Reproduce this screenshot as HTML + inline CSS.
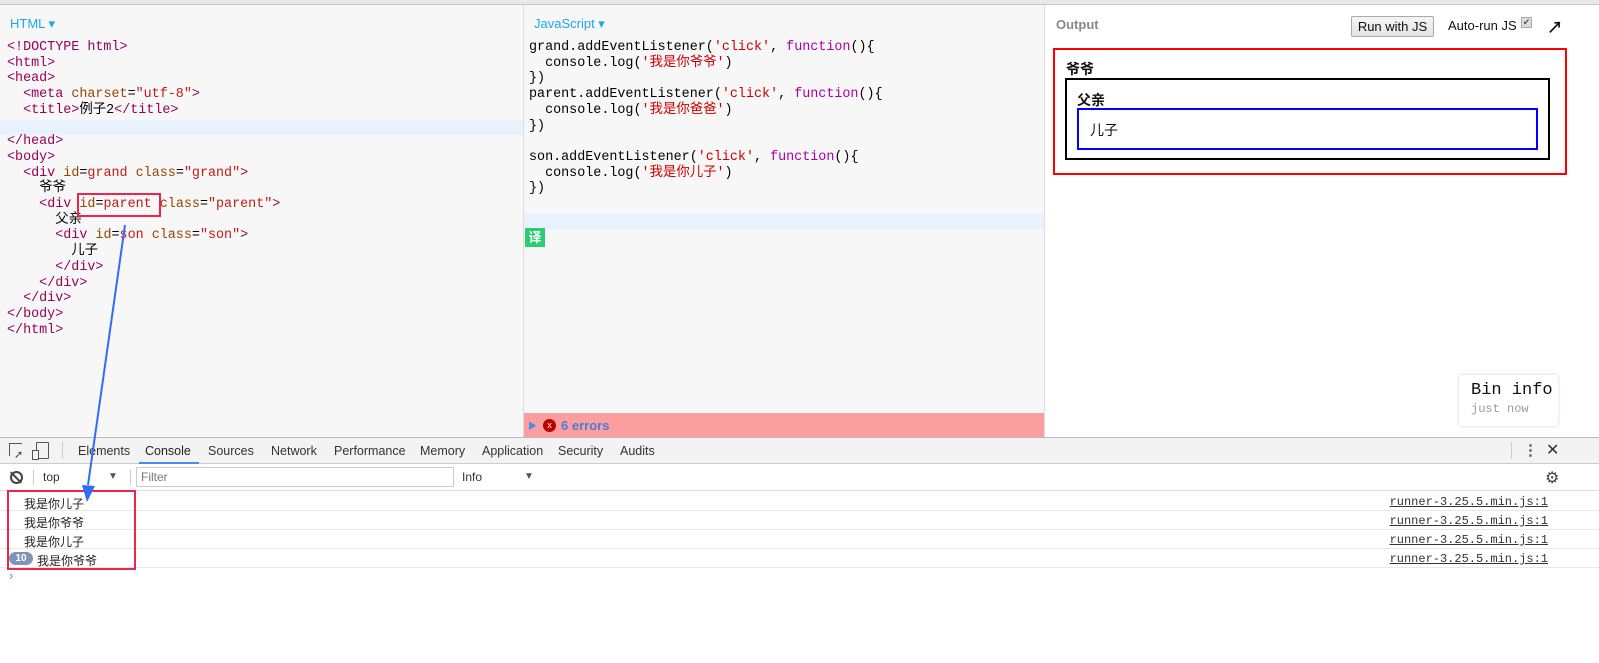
<!DOCTYPE html>
<html><head><meta charset="utf-8"><style>
*{margin:0;padding:0;box-sizing:border-box}
body{width:1599px;height:663px;overflow:hidden;position:relative;background:#fff;font-family:"Liberation Sans","Noto Sans CJK SC",sans-serif}
.abs{position:absolute}
.code{font-family:"Liberation Mono","Noto Sans CJK SC",monospace;font-size:13.4px;line-height:15.7px;white-space:pre;color:#000}
.t{color:#905}.a{color:#994500}.s{color:#c41a16}.k{color:#a0a}
.s2{color:#c00}
.lbl{font-size:13px;color:#19a8f2}
.tab{position:absolute;top:444px;font-size:12.5px;color:#333}
.row{position:absolute;left:0;width:1599px;height:19px;border-bottom:1px solid #e8e8e8;font-size:12px}
.row .m{position:absolute;left:24px;top:3px;color:#222;font-family:"Liberation Sans","Noto Sans CJK SC",sans-serif}
.row .r{position:absolute;right:51px;top:3px;font-family:"Liberation Mono",monospace;font-size:12px;color:#333;text-decoration:underline}
</style></head><body>
<div class="abs" style="left:0;top:0;width:1599px;height:5px;background:#e9e9e9;border-bottom:1px solid #c8c8c8"></div>
<!-- HTML panel -->
<div class="abs" style="left:0;top:5px;width:523px;height:432px;background:#f7f7f7"></div>
<div class="abs" style="left:523px;top:5px;width:1px;height:432px;background:#ddd"></div>
<div class="abs lbl" style="left:10px;top:16px">HTML ▾</div>
<div class="abs" style="left:0;top:120px;width:523px;height:15px;background:#e8f2fe"></div>
<div class="abs code" style="left:7px;top:40px"><span class="t">&lt;!DOCTYPE html&gt;</span>
<span class="t">&lt;html&gt;</span>
<span class="t">&lt;head&gt;</span>
  <span class="t">&lt;meta</span> <span class="a">charset</span>=<span class="s">"utf-8"</span><span class="t">&gt;</span>
  <span class="t">&lt;title&gt;</span>例子2<span class="t">&lt;/title&gt;</span>

<span class="t">&lt;/head&gt;</span>
<span class="t">&lt;body&gt;</span>
  <span class="t">&lt;div</span> <span class="a">id</span>=<span class="s">grand</span> <span class="a">class</span>=<span class="s">"grand"</span><span class="t">&gt;</span>
    爷爷
    <span class="t">&lt;div</span> <span class="a">id</span>=<span class="s">parent</span> <span class="a">class</span>=<span class="s">"parent"</span><span class="t">&gt;</span>
      父亲
      <span class="t">&lt;div</span> <span class="a">id</span>=<span class="s">son</span> <span class="a">class</span>=<span class="s">"son"</span><span class="t">&gt;</span>
        儿子
      <span class="t">&lt;/div&gt;</span>
    <span class="t">&lt;/div&gt;</span>
  <span class="t">&lt;/div&gt;</span>
<span class="t">&lt;/body&gt;</span>
<span class="t">&lt;/html&gt;</span></div>
<div class="abs" style="left:77px;top:193px;width:84px;height:24px;border:2px solid #f0244a"></div>
<!-- JS panel -->
<div class="abs" style="left:524px;top:5px;width:520px;height:432px;background:#f7f7f7"></div>
<div class="abs" style="left:1044px;top:5px;width:1px;height:432px;background:#ddd"></div>
<div class="abs lbl" style="left:534px;top:16px">JavaScript ▾</div>
<div class="abs" style="left:524px;top:214px;width:520px;height:16px;background:#e8f2fe"></div>
<div class="abs code" style="left:529px;top:40px">grand.addEventListener(<span class="s2">'click'</span>, <span class="k">function</span>(){
  console.log(<span class="s2">'我是你爷爷'</span>)
})
parent.addEventListener(<span class="s2">'click'</span>, <span class="k">function</span>(){
  console.log(<span class="s2">'我是你爸爸'</span>)
})

son.addEventListener(<span class="s2">'click'</span>, <span class="k">function</span>(){
  console.log(<span class="s2">'我是你儿子'</span>)
})</div>
<div class="abs" style="left:525px;top:228px;width:20px;height:19px;background:#2ecc71;color:#fff;font-size:13px;font-weight:bold;text-align:center;line-height:19px">译</div>
<div class="abs" style="left:524px;top:413px;width:520px;height:24px;background:#fc9d9f"></div>
<div class="abs" style="left:528px;top:419px;color:#4a90e2;font-size:9px">▶</div>
<div class="abs" style="left:543px;top:419px;width:13px;height:13px;border-radius:50%;background:#b00;color:#fff;font-size:9px;line-height:13px;text-align:center">x</div>
<div class="abs" style="left:561px;top:418px;color:#4a7fd0;font-size:13px;font-weight:bold">6 errors</div>
<!-- Output -->
<div class="abs" style="left:1056px;top:17px;color:#888;font-size:13px;font-weight:bold">Output</div>
<div class="abs" style="left:1351px;top:16px;width:83px;height:21px;border:1px solid #aaa;border-radius:2px;background:linear-gradient(#f5f5f5,#e4e4e4);font-size:13px;text-align:center;line-height:19px;color:#111">Run with JS</div>
<div class="abs" style="left:1448px;top:18px;font-size:13px;color:#111">Auto-run JS</div>
<div class="abs" style="left:1521px;top:17px;width:11px;height:11px;border:1px solid #aaa;background:#ddd;font-size:9px;line-height:9px;text-align:center;color:#555">✔</div>
<div class="abs" style="left:1547px;top:14px;font-size:16px;font-weight:bold;color:#111">↗</div>
<div class="abs" style="left:1053px;top:48px;width:514px;height:127px;border:2px solid #f00"></div>
<div class="abs" style="left:1066px;top:59px;font-size:14px;font-weight:bold;color:#111">爷爷</div>
<div class="abs" style="left:1065px;top:78px;width:485px;height:82px;border:2px solid #000"></div>
<div class="abs" style="left:1077px;top:90px;font-size:14px;font-weight:bold;color:#111">父亲</div>
<div class="abs" style="left:1077px;top:108px;width:461px;height:42px;border:2px solid #00f"></div>
<div class="abs" style="left:1090px;top:120px;font-size:14px;color:#111">儿子</div>
<div class="abs" style="left:1459px;top:375px;width:99px;height:51px;background:#fff;box-shadow:0 0 3px rgba(0,0,0,.2);border-radius:2px"></div>
<div class="abs" style="left:1471px;top:381px;font-family:'Liberation Mono',monospace;font-size:17px;color:#111">Bin info</div>
<div class="abs" style="left:1471px;top:402px;font-family:'Liberation Mono',monospace;font-size:12px;color:#999">just now</div>
<!-- devtools -->
<div class="abs" style="left:0;top:437px;width:1599px;height:27px;background:#f3f3f3;border-top:1px solid #bbb;border-bottom:1px solid #ccc"></div>
<div class="abs" style="left:9px;top:443px;width:13px;height:13px;border:1px solid #555;border-right:none;border-bottom:none;font-size:10px"></div>
<div class="abs" style="left:14px;top:448px;font-size:11px;color:#444">➚</div>
<div class="abs" style="left:36px;top:442px;width:13px;height:17px;border:1.5px solid #555;border-radius:1px"></div>
<div class="abs" style="left:32px;top:450px;width:7px;height:10px;border:1.5px solid #555;background:#f3f3f3"></div>
<div class="abs" style="left:62px;top:442px;width:1px;height:17px;background:#ccc"></div>
<div class="tab" style="left:78px">Elements</div>
<div class="tab" style="left:145px;color:#222">Console</div>
<div class="abs" style="left:139px;top:462px;width:60px;height:2px;background:#4a8af4"></div>
<div class="tab" style="left:208px">Sources</div>
<div class="tab" style="left:271px">Network</div>
<div class="tab" style="left:334px">Performance</div>
<div class="tab" style="left:420px">Memory</div>
<div class="tab" style="left:482px">Application</div>
<div class="tab" style="left:558px">Security</div>
<div class="tab" style="left:620px">Audits</div>
<div class="abs" style="left:1511px;top:442px;width:1px;height:17px;background:#ccc"></div>
<div class="abs" style="left:1523px;top:441px;font-size:15px;color:#555;font-weight:bold">⋮</div>
<div class="abs" style="left:1546px;top:440px;font-size:16px;color:#333">✕</div>
<div class="abs" style="left:0;top:464px;width:1599px;height:27px;background:#fff;border-bottom:1px solid #ddd"></div>
<div class="abs" style="left:10px;top:471px;width:13px;height:13px;border:2px solid #444;border-radius:50%"></div>
<div class="abs" style="left:15px;top:470px;width:2px;height:15px;background:#444;transform:rotate(-45deg)"></div>
<div class="abs" style="left:33px;top:470px;width:1px;height:15px;background:#ccc"></div>
<div class="abs" style="left:43px;top:470px;font-size:12px;color:#333">top</div>
<div class="abs" style="left:108px;top:471px;font-size:10px;color:#555">▼</div>
<div class="abs" style="left:130px;top:470px;width:1px;height:15px;background:#ccc"></div>
<div class="abs" style="left:136px;top:467px;width:318px;height:20px;border:1px solid #ccc"></div>
<div class="abs" style="left:141px;top:470px;font-size:12px;color:#777">Filter</div>
<div class="abs" style="left:462px;top:470px;font-size:12px;color:#333">Info</div>
<div class="abs" style="left:524px;top:471px;font-size:10px;color:#555">▼</div>
<div class="abs" style="left:1545px;top:468px;font-size:16px;color:#444">⚙</div>
<div class="row" style="top:492px"><span class="m">我是你儿子</span><span class="r">runner-3.25.5.min.js:1</span></div>
<div class="row" style="top:511px"><span class="m">我是你爷爷</span><span class="r">runner-3.25.5.min.js:1</span></div>
<div class="row" style="top:530px"><span class="m">我是你儿子</span><span class="r">runner-3.25.5.min.js:1</span></div>
<div class="row" style="top:549px"><span class="abs" style="left:9px;top:3px;width:24px;height:13px;border-radius:7px;background:#7f95b8;color:#fff;font-size:10px;font-weight:bold;text-align:center;line-height:13px">10</span><span class="m" style="left:37px">我是你爷爷</span><span class="r">runner-3.25.5.min.js:1</span></div>
<div class="abs" style="left:9px;top:568px;color:#4a8af4;font-size:13px">›</div>
<div class="abs" style="left:7px;top:490px;width:129px;height:80px;border:2px solid #f0244a"></div>
<svg class="abs" style="left:0;top:0" width="1599" height="663"><line x1="125" y1="225" x2="88" y2="485" stroke="#2f6df6" stroke-width="2"/><polygon points="82,485 95,486 87,502" fill="#2f6df6"/></svg>
</body></html>
